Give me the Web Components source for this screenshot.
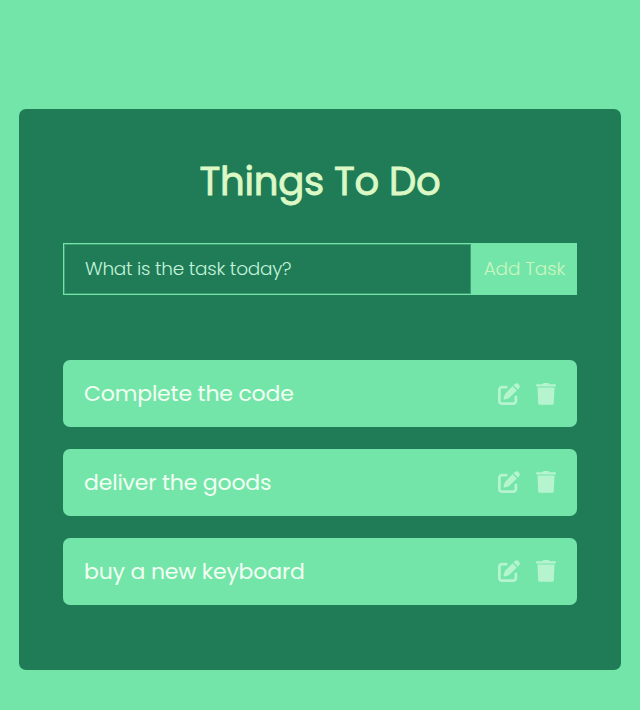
<!DOCTYPE html>
<html lang="en">
<head>
<meta charset="utf-8">
<title>Things To Do</title>
<style>
  html, body { margin: 0; background: #74e5a9; }
  body { font-family: Poppins, Inter, "Open Sans", sans-serif; }
</style>
</head>
<body>
<todo-app>
  <todo-form></todo-form>
  <todo-item>Complete the code</todo-item>
  <todo-item>deliver the goods</todo-item>
  <todo-item>buy a new keyboard</todo-item>
</todo-app>
<script>
const define = (name, html) => customElements.define(name, class extends HTMLElement {
  constructor() {
    super();
    this.attachShadow({ mode: 'open' }).innerHTML = html;
  }
});

define('todo-app', `
  <style>
    :host { display: flow-root; }
    main { box-sizing: border-box; width: 602px; height: 561px; margin: 109px auto 0; padding: 48px 44px 0;
      background: #1f7c57; border-radius: 7px; }
    h1 { margin: 0 0 36px; height: 50px; line-height: 50px; text-align: center; white-space: nowrap;
      color: #dcf8c5; font-size: 38.6px; font-weight: 400; letter-spacing: -.25px; -webkit-text-stroke: .9px #dcf8c5; }
  </style>
  <main><h1>Things To Do</h1><slot></slot></main>`);

define('todo-form', `
  <style>
    :host { display: block; margin-bottom: 65px; }
    form { display: flex; height: 52px; }
    input, button { box-sizing: border-box; margin: 0; font: inherit;
      font-size: 18.5px; font-weight: 300; border-radius: 0; outline: none; }
    input { flex: 1; min-width: 0; padding: 0 0 2px 21px; background: transparent; color: #fff;
      border: 1px solid #74e5a9; border-right: 0; letter-spacing: -.28px;
      box-shadow: inset 0 0 0 1px rgba(116, 229, 169, .35); }
    input::placeholder { color: #c4f3db; opacity: 1; }
    button { width: 106px; padding: 0 0 1px 1px; border: 0; background: #74e5a9; color: #c9f7c0;
      white-space: nowrap; letter-spacing: -.1px; }
  </style>
  <form><input placeholder="What is the task today?"><button type="button">Add Task</button></form>`);

define('todo-item', `
  <style>
    :host { display: flex; align-items: center; box-sizing: border-box; height: 67px; margin-bottom: 21.8px;
      padding: 0 21px; background: #74e5a9; border-radius: 7px; color: #f1fff3; font-size: 22px; font-weight: 400; }
    span { flex: 1; white-space: nowrap; letter-spacing: -.18px; }
    svg { display: block; fill: #b6f4cf; }
    .trash { margin-left: 16px; }
  </style>
  <span><slot></slot></span>
  <svg width="22" height="22" viewBox="0 0 512 512"><path d="M471.6 21.7c-21.9-21.9-57.3-21.9-79.2 0L362.3 51.7l97.9 97.9 30.1-30.1c21.9-21.9 21.9-57.3 0-79.2L471.6 21.7zm-299.2 220c-6.1 6.1-10.8 13.6-13.5 21.9l-29.6 88.8c-2.9 8.6-.6 18.1 5.8 24.6s15.9 8.7 24.6 5.8l88.8-29.6c8.2-2.7 15.7-7.4 21.9-13.5L437.7 172.3 339.7 74.3 172.4 241.7zM96 64C43 64 0 107 0 160V416c0 53 43 96 96 96H352c53 0 96-43 96-96V320c0-17.7-14.3-32-32-32s-32 14.3-32 32v96c0 17.7-14.3 32-32 32H96c-17.7 0-32-14.3-32-32V160c0-17.7 14.3-32 32-32h96c17.7 0 32-14.3 32-32s-14.3-32-32-32H96z"/></svg>
  <svg class="trash" width="20" height="22" viewBox="0 0 20 22"><path d="M6 1.2Q6.8.2 8.200 0h3.600Q13.200.2 14 1.200H19a1 1 0 0 1 1 1v.3a1 1 0 0 1-1 1H1a1 1 0 0 1-1-1v-.3a1 1 0 0 1 1-1zM1.500 4.400H18.500L17.800 20.200Q17.700 21.700 16.200 21.700H3.800Q2.300 21.700 2.200 20.200z"/></svg>`);
</script>
</body>
</html>
